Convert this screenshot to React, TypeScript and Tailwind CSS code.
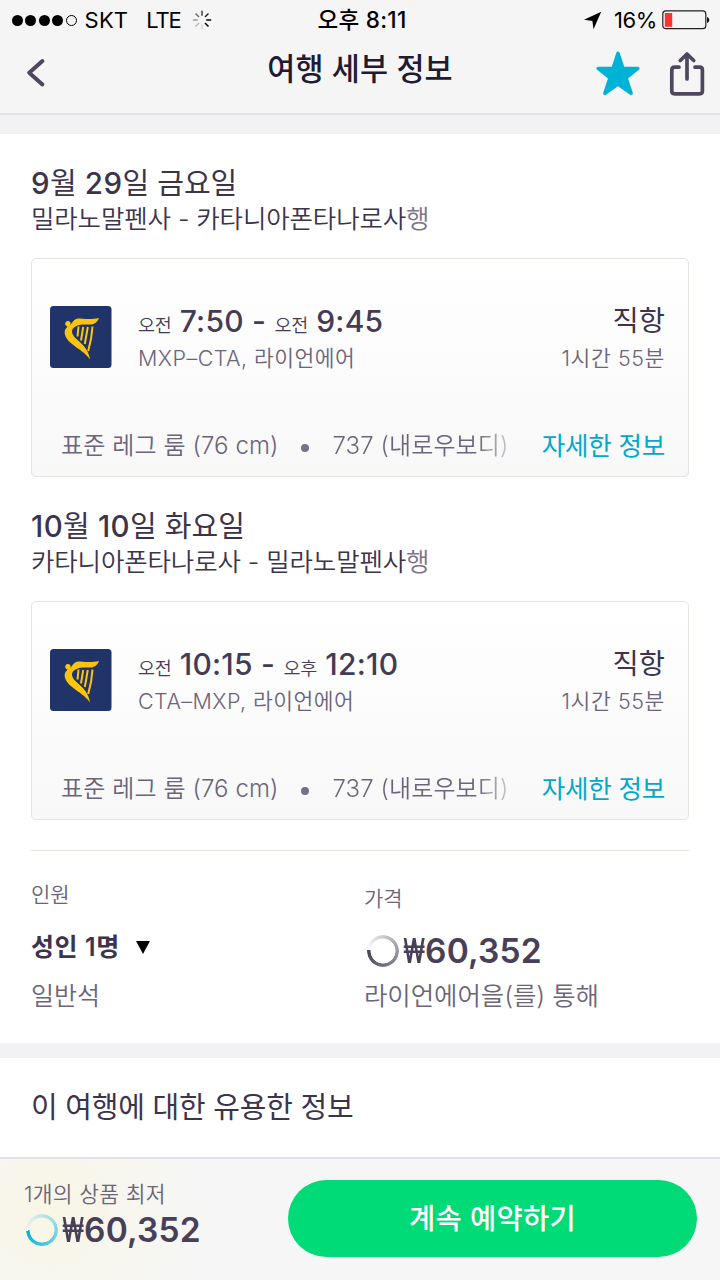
import clsx from 'clsx';

interface Leg {
  id: string;
  date: string;
  route: string;
  depart: { period: string; time: string };
  arrive: { period: string; time: string };
  carrier: string;
}

const legs: Leg[] = [
  {
    id: 'outbound',
    date: '9월 29일 금요일',
    route: '밀라노말펜사 - 카타니아폰타나로사',
    depart: { period: '오전', time: '7:50' },
    arrive: { period: '오전', time: '9:45' },
    carrier: 'MXP–CTA, 라이언에어'
  },
  {
    id: 'inbound',
    date: '10월 10일 화요일',
    route: '카타니아폰타나로사 - 밀라노말펜사',
    depart: { period: '오전', time: '10:15' },
    arrive: { period: '오후', time: '12:10' },
    carrier: 'CTA–MXP, 라이언에어'
  }
];

const StatusBar = () => (
  <div className="grid h-[40px] grid-cols-3 items-center text-[22px] leading-[40px] text-black">
    <div className="flex items-center pl-[12px]">
      <div className="flex gap-[2.4px]">
        {[0, 1, 2, 3].map((i) => (
          <span key={i} className="h-[11px] w-[11px] rounded-full bg-black" />
        ))}
        <span className="h-[11px] w-[11px] rounded-full border border-black" />
      </div>
      <span className="ml-[8px] tracking-[0.2px]">SKT</span>
      <span className="ml-[18px] tracking-[-1.2px]">LTE</span>
      <svg className="ml-[12px] h-[20px] w-[20px]" viewBox="0 0 20 20" stroke="#000" strokeWidth="1.5">
        {[0.75, 0.85, 1, 1, 0.12, 0.25, 0.35, 0.55].map((opacity, i) => (
          <path key={i} d="M10 .8v5" opacity={opacity} transform={`rotate(${i * 45} 10 10)`} />
        ))}
      </svg>
    </div>
    <div className="pl-[4px] text-center text-[22.5px] font-medium tracking-[0.3px]">오후 8:11</div>
    <div className="flex items-center justify-end pr-[10px]">
      <svg className="mr-[12px] h-[19px] w-[19px]" viewBox="0 0 19 19">
        <path d="M18.2.8 10.5 18.2 9.4 10 1 8.8Z" />
      </svg>
      <span className="mr-[5px] tracking-[-0.4px]">16%</span>
      <svg className="h-[20px] w-[48px]" viewBox="0 0 48 20">
        <rect x=".8" y=".9" width="43" height="17.8" rx="3" fill="none" stroke="#222" strokeWidth="1.2" />
        <path d="M2.8 3h7.4v13.8H2.8z" fill="#fc3330" />
        <path d="M45 7c3 1 3 5 0 6z" fill="#111" />
      </svg>
    </div>
  </div>
);

const NavBar = () => (
  <div className="grid h-[73px] grid-cols-3 text-[#484058]">
    <svg className="ml-[26px] mt-[18px] h-[30px] w-[20px]" viewBox="0 0 20 30" fill="none" stroke="#4f475f" strokeWidth="4" strokeLinecap="round" strokeLinejoin="round">
      <path d="M16.400 3 3.200 14.700 16.400 26.400" />
    </svg>
    <h1 className="text-center text-[30.5px] leading-[58px] font-medium tracking-[0.1px] whitespace-nowrap text-[#221a33]">
      여행 세부 정보
    </h1>
    <div className="flex justify-end pr-[15px]">
      <svg className="mt-[11px] h-[45px] w-[44px]" viewBox="0 0 44 45" fill="#00b2d6" stroke="#00b2d6" strokeWidth="3.500" strokeLinejoin="round">
        <path d="M22 2.300 26.900 17.400 41.800 17.500 30 26.800 35.100 42.200 22 33 8.900 42.200 14 26.800 2.200 17.500 17.100 17.400Z" />
      </svg>
      <svg className="ml-[29px] mt-[11px] h-[46px] w-[36px]" viewBox="0 0 36 46" fill="none" stroke="#4f475f" strokeWidth="3.700" strokeLinecap="round" strokeLinejoin="round">
        <path d="M10 16.200H5.500Q2.800 16.200 2.800 19v21q0 2.800 2.800 2.800h25q2.800 0 2.800-2.800V19q0-2.800-2.800-2.800H26M18 28V3.500M11.300 9.500 18 3l6.700 6.500" />
      </svg>
    </div>
  </div>
);

const AirlineLogo = () => (
  <svg className="mt-[3px] h-[62px] w-[62px] shrink-0" viewBox="0 0 62 62">
    <rect width="61.500" height="62" rx="3.500" fill="#21346a" />
    <g fill="#fcc40c">
      <path d="M23 15.500C26 11.500 31 12.700 36 13 41 13.300 45 12.600 49 12 47.500 16 44.500 18.500 40 18.500 33 18.500 28 18 24 21.500 20 25 22.500 29.500 27 33.500 33 38.500 38.500 44 40 53.500 35 46.500 29 43.500 24 39.500 17 34.500 13.500 29 15 24 16 22 17 21.500 17.500 20.500 14.500 19.500 15 15 18.500 15.500 20.500 16 20.500 18 20 19.500Z" />
      <circle cx="18" cy="17.500" r="2.600" />
    </g>
    <path d="M28.500 20.500 27.500 30.500M33.200 21 31 34.500M37.800 21 34.800 38M42.500 20.500C42 30 40.500 37 38.200 45" fill="none" stroke="#fcc40c" strokeWidth="2" />
  </svg>
);

const LegCard = ({ leg }: { leg: Leg }) => (
  <article>
    <h2 className="h-[34px] text-[29px] leading-[35px] text-[#3c344d]">
      {/* digits sit a touch heavier than the hangul around them */}
      {leg.date.split(/(\d+)/).map((part, i) =>
        i % 2 === 1 ? (
          <span key={i} className="text-[29.5px] leading-none font-medium tracking-[0.4px]">{part}</span>
        ) : (
          <span key={i}>{part}</span>
        )
      )}
    </h2>
    <p className="text-[25.5px] leading-[37px] font-[350] tracking-[-0.15px] text-[#3c344d]">
      {leg.route}
      <span className="text-[#7b748a]">행</span>
    </p>
    <div className="mt-[21px] h-[219px] rounded-[5px] border border-[#e4e3ea] bg-linear-to-b from-white to-[#f8f8f8] pt-[44px] pr-[23px] pl-[18px]">
      <div className="flex">
        <AirlineLogo />
        <div className="ml-[26px] flex-1">
          <div className="h-[35px] text-[30px] leading-[36px] font-medium tracking-[0.25px] text-[#443c54]">
            <span className="text-[18.5px] leading-none font-[350] tracking-[-0.3px]">{leg.depart.period}</span> {leg.depart.time} -{' '}
            <span className="text-[18.5px] leading-none font-[350] tracking-[-0.3px]">{leg.arrive.period}</span> {leg.arrive.time}
          </div>
          <div className="text-[21.5px] leading-[41px] font-[350] tracking-[0.45px] text-[#6b647b]">{leg.carrier}</div>
        </div>
        <div className="text-right">
          <div className="text-[28.5px] leading-[36px] text-[#3c344d]">직항</div>
          <div className="-mt-px text-[21.5px] leading-[41px] font-[350] tracking-[0.6px] text-[#6b647b]">1시간 55분</div>
        </div>
      </div>
      <div className="mt-[49px] flex items-center pl-[11px] text-[24px] leading-[36px] font-[350] tracking-[0.1px] whitespace-nowrap text-[#6b647b]">
        <span>표준 레그 룸 (76 cm)</span>
        <span className="mx-[23px] mt-[3px] h-[8px] w-[8px] rounded-full bg-[#777086]" />
        <span className="bg-linear-to-r from-[#6b647b] from-82% to-[#c9c7cf] bg-clip-text text-transparent">737 (내로우보디)</span>
        <span className="ml-auto text-[25.5px] font-normal tracking-[-0.2px] text-[#00a8cb]">자세한 정보</span>
      </div>
    </div>
  </article>
);

const Price = ({ accent = false }: { accent?: boolean }) => (
  <div className="flex items-center text-[33.5px] font-semibold tracking-[0.2px] text-[#484058]">
    <span
      className={clsx(
        'h-[32px] w-[32px] rounded-full mask-[radial-gradient(circle,transparent_12.2px,black_12.8px)]',
        accent
          ? 'bg-[conic-gradient(from_268deg,transparent,#8fd9e6_45%,#00b2d6)]'
          : 'bg-[conic-gradient(from_275deg,transparent,#a9a5b2_40%,#484058)]'
      )}
    />
    <span className="ml-[4px] inline-block w-[22px] origin-left scale-x-[0.66]">₩</span>
    <span>60,352</span>
  </div>
);

export default function App() {
  return (
    <main className="flex h-[1280px] w-[720px] flex-col overflow-hidden bg-white font-['Inter','Noto_Sans_CJK_KR',sans-serif]">
      <header className="border-b-2 border-[#e2e1e9] bg-[#f5f5f5]">
        <StatusBar />
        <NavBar />
      </header>
      <div className="h-[19px] bg-[#f2f2f4]" />

      <section className="px-[31px] pt-[32px]">
        <div className="flex flex-col gap-[32px]">
          {legs.map((leg) => (
            <LegCard key={leg.id} leg={leg} />
          ))}
        </div>
        <hr className="mt-[30px] border-[#e4e3ea]" />
      </section>

      <section className="grid h-[192px] grid-cols-[333px_1fr] pl-[31px] text-[#6b647b]">
        <div className="pt-[29px]">
          <div className="text-[21px] leading-[30px] font-[350]">인원</div>
          <div className="mt-[15px] flex items-center text-[25px] leading-[45px] font-semibold tracking-[0.6px] text-[#3c344d]">
            성인 1명
            <svg className="ml-[16px] h-[13px] w-[14px]" viewBox="0 0 14 13">
              <path d="M0 0h14L7 13z" fill="#000" />
            </svg>
          </div>
          <div className="text-[25px] leading-[53px] font-[350]">일반석</div>
        </div>
        <div className="pt-[33px]">
          <div className="text-[21px] leading-[30px] font-[350]">가격</div>
          <div className="mt-[11px] ml-[3px] leading-[52px]">
            <Price />
          </div>
          <div className="text-[25.5px] leading-[38px] font-[350] tracking-[-0.1px]">라이언에어을(를) 통해</div>
        </div>
      </section>
      <div className="h-[15px] bg-[#f2f2f4]" />

      <section className="h-[99px] px-[31px]">
        <h2 className="text-[29px] leading-[99px] tracking-[-0.25px] text-[#3c344d]">이 여행에 대한 유용한 정보</h2>
      </section>

      <footer className="flex h-[123px] justify-between border-t-2 border-[#e2e1e9] bg-[#f6f6f6] bg-[radial-gradient(circle_at_50px_50px,#f9f6e6,#f6f6f6_150px)] pt-[21px] pr-[23px] pl-[24px]">
        <div className="text-[#6b647b]">
          <div className="text-[21.5px] leading-[28px] font-[350] tracking-[0.3px]">1개의 상품 최저</div>
          <div className="ml-[2px] leading-[44px]">
            <Price accent />
          </div>
        </div>
        <button className="h-[77px] w-[409px] rounded-full bg-[#00da77] text-[28.5px] leading-[77px] font-medium tracking-[0.3px] text-white">
          계속 예약하기
        </button>
      </footer>
    </main>
  );
}
